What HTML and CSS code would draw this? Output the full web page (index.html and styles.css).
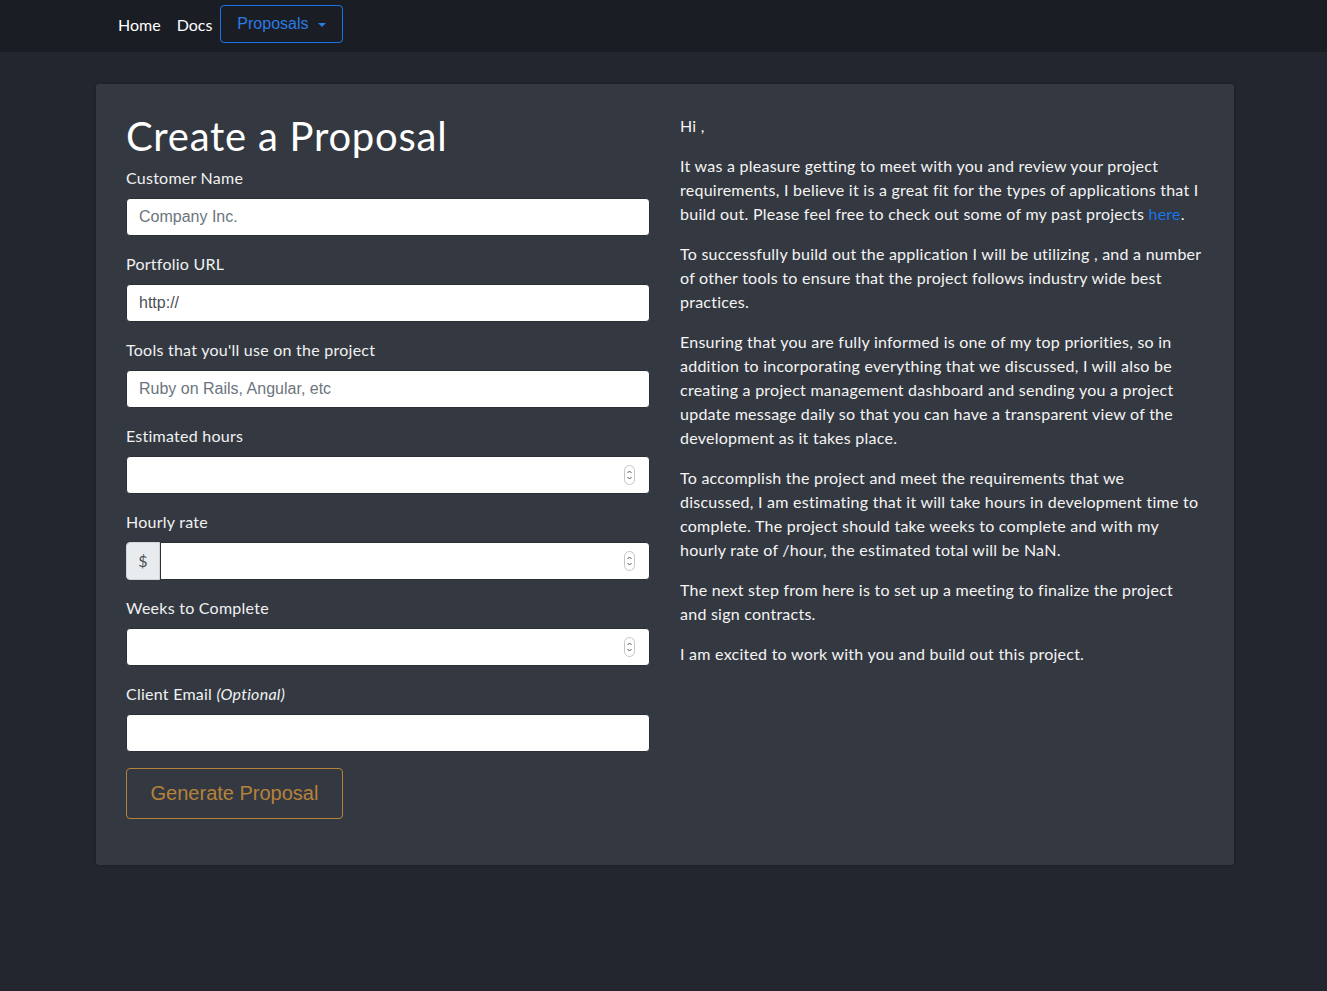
FILE: index.html
```html
<!DOCTYPE html>
<html lang="en">
<head>
<meta charset="utf-8">
<title>Create a Proposal</title>
<link rel="stylesheet" href="styles.css">
</head>
<body>
<nav class="navbar">
  <div class="nav-inner">
    <a class="nav-link" href="#">Home</a>
    <a class="nav-link" href="#">Docs</a>
    <button class="dropdown-btn" type="button">Proposals <span class="caret"></span></button>
  </div>
</nav>
<main class="card">
  <div class="row">
    <section class="col col-form">
      <h1 class="title">Create a Proposal</h1>
      <form class="form">
        <div class="form-group">
          <label class="label">Customer Name</label>
          <input class="input" type="text" placeholder="Company Inc.">
        </div>
        <div class="form-group">
          <label class="label">Portfolio URL</label>
          <input class="input" type="text" value="http://">
        </div>
        <div class="form-group">
          <label class="label">Tools that you'll use on the project</label>
          <input class="input" type="text" placeholder="Ruby on Rails, Angular, etc">
        </div>
        <div class="form-group">
          <label class="label">Estimated hours</label>
          <div class="num-wrap">
            <input class="input" type="number">
            <svg class="spin" width="11" height="20" viewBox="0 0 11 20"><rect x="0.5" y="0.5" width="10" height="19" rx="5" fill="#fff" stroke="#c4c4c4"/><path d="M3.5 8 L5.5 6 L7.5 8" fill="none" stroke="#555" stroke-width="1"/><path d="M3.5 12 L5.5 14 L7.5 12" fill="none" stroke="#555" stroke-width="1"/></svg>
          </div>
        </div>
        <div class="form-group">
          <label class="label">Hourly rate</label>
          <div class="input-group">
            <span class="prepend">$</span>
            <div class="num-wrap grow">
              <input class="input input-grouped" type="number">
              <svg class="spin" width="11" height="20" viewBox="0 0 11 20"><rect x="0.5" y="0.5" width="10" height="19" rx="5" fill="#fff" stroke="#c4c4c4"/><path d="M3.5 8 L5.5 6 L7.5 8" fill="none" stroke="#555" stroke-width="1"/><path d="M3.5 12 L5.5 14 L7.5 12" fill="none" stroke="#555" stroke-width="1"/></svg>
            </div>
          </div>
        </div>
        <div class="form-group">
          <label class="label">Weeks to Complete</label>
          <div class="num-wrap">
            <input class="input" type="number">
            <svg class="spin" width="11" height="20" viewBox="0 0 11 20"><rect x="0.5" y="0.5" width="10" height="19" rx="5" fill="#fff" stroke="#c4c4c4"/><path d="M3.5 8 L5.5 6 L7.5 8" fill="none" stroke="#555" stroke-width="1"/><path d="M3.5 12 L5.5 14 L7.5 12" fill="none" stroke="#555" stroke-width="1"/></svg>
          </div>
        </div>
        <div class="form-group">
          <label class="label">Client Email <em>(Optional)</em></label>
          <input class="input" type="email">
        </div>
        <button class="btn-generate" type="button">Generate Proposal</button>
      </form>
    </section>
    <section class="col col-letter">
      <p>Hi ,</p>
      <p>It was a pleasure getting to meet with you and review your project requirements, I believe it is a great fit for the types of applications that I build out. Please feel free to check out some of my past projects <a class="link" href="#">here</a>.</p>
      <p>To successfully build out the application I will be utilizing , and a number of other tools to ensure that the project follows industry wide best practices.</p>
      <p>Ensuring that you are fully informed is one of my top priorities, so in addition to incorporating everything that we discussed, I will also be creating a project management dashboard and sending you a project update message daily so that you can have a transparent view of the development as it takes place.</p>
      <p>To accomplish the project and meet the requirements that we<br>discussed, I am estimating that it will take hours in development time to<br>complete. The project should take weeks to complete and with my<br>hourly rate of /hour, the estimated total will be NaN.</p>
      <p>The next step from here is to set up a meeting to finalize the project<br>and sign contracts.</p>
      <p>I am excited to work with you and build out this project.</p>
    </section>
  </div>
</main>
</body>
</html>
```
FILE: styles.css
```css
* { box-sizing: border-box; }
html, body { margin: 0; padding: 0; }
body {
  background: #23262e;
  color: #fff;
  font-family: Lato, "Open Sans", sans-serif;
  font-size: 16px;
  line-height: 24px;
  letter-spacing: 0.25px;
  min-height: 991px;
}
.navbar {
  background: #1b1d24;
  height: 52px;
}
.nav-inner {
  display: flex;
  align-items: center;
  padding: 5px 0 0 110px;
  height: 43px;
}
.nav-link {
  color: #fff;
  text-decoration: none;
  padding: 0 8px;
  font-size: 16px;
  line-height: 24px;
  letter-spacing: 0;
  margin-top: 1px;
}
.dropdown-btn {
  height: 38px;
  width: 123px;
  padding: 0 16px;
  background: transparent;
  border: 1px solid #1a73e8;
  border-radius: 4px;
  color: #2a7be6;
  font-family: "Liberation Sans", Arial, sans-serif;
  font-size: 16px;
  letter-spacing: 0;
  text-align: left;
  display: flex;
  align-items: center;
  gap: 9px;
}
.caret {
  display: inline-block;
  width: 0;
  height: 0;
  border-left: 4px solid transparent;
  border-right: 4px solid transparent;
  border-top: 4px solid #2a7be6;
  margin-top: 2px;
}
.card {
  width: 1138px;
  margin: 32px 0 0 96px;
  background: #343941;
  border-radius: 3px;
  box-shadow: 0 0 3px rgba(0,0,0,0.35);
  padding: 30px 30px 30px;
}
.row {
  display: grid;
  grid-template-columns: 524px 524px;
  column-gap: 30px;
}
.title {
  margin: 0 0 8px;
  font-family: Lato, "Open Sans", sans-serif;
  font-weight: 400;
  font-size: 40px;
  line-height: 44px;
  letter-spacing: 0.75px;
}
.form { margin: 0 0 16px; }
.form-group { margin-bottom: 16px; }
.label {
  display: block;
  margin-bottom: 8px;
  line-height: 24px;
  color: #f1f1f1;
}
.label em { font-style: italic; }
.num-wrap { position: relative; }
.num-wrap.grow { flex: 1; display: flex; }
.spin {
  position: absolute;
  right: 15px;
  top: 9px;
}
.input {
  display: block;
  width: 100%;
  height: 38px;
  padding: 6px 12px;
  background: #fff;
  border: 1px solid #2a2e35;
  border-radius: 4px;
  color: #495057;
  font-family: "Liberation Sans", Arial, sans-serif;
  font-size: 16px;
  line-height: 24px;
  letter-spacing: 0;
}
.input::placeholder { color: #6c757d; }
.input::-webkit-inner-spin-button,
.input::-webkit-outer-spin-button { -webkit-appearance: none; margin: 0; }
.input-group { display: flex; }
.prepend {
  width: 34px;
  height: 38px;
  display: flex;
  align-items: center;
  justify-content: center;
  background: #e9ecef;
  border: 1px solid #ced4da;
  border-radius: 4px 0 0 4px;
  color: #495057;
  font-size: 16px;
}
.input-grouped {
  flex: 1;
  border-radius: 0 4px 4px 0;
}
.btn-generate {
  display: block;
  width: 217px;
  height: 51px;
  padding: 0;
  background: transparent;
  border: 1px solid #b5823a;
  border-radius: 4px;
  color: #b5823a;
  font-family: "Liberation Sans", Arial, sans-serif;
  font-size: 20px;
  letter-spacing: 0;
}
.col-letter p {
  margin: 0 0 16px;
  color: #f4f4f4;
}
.link { color: #1a73e8; text-decoration: none; }
```
